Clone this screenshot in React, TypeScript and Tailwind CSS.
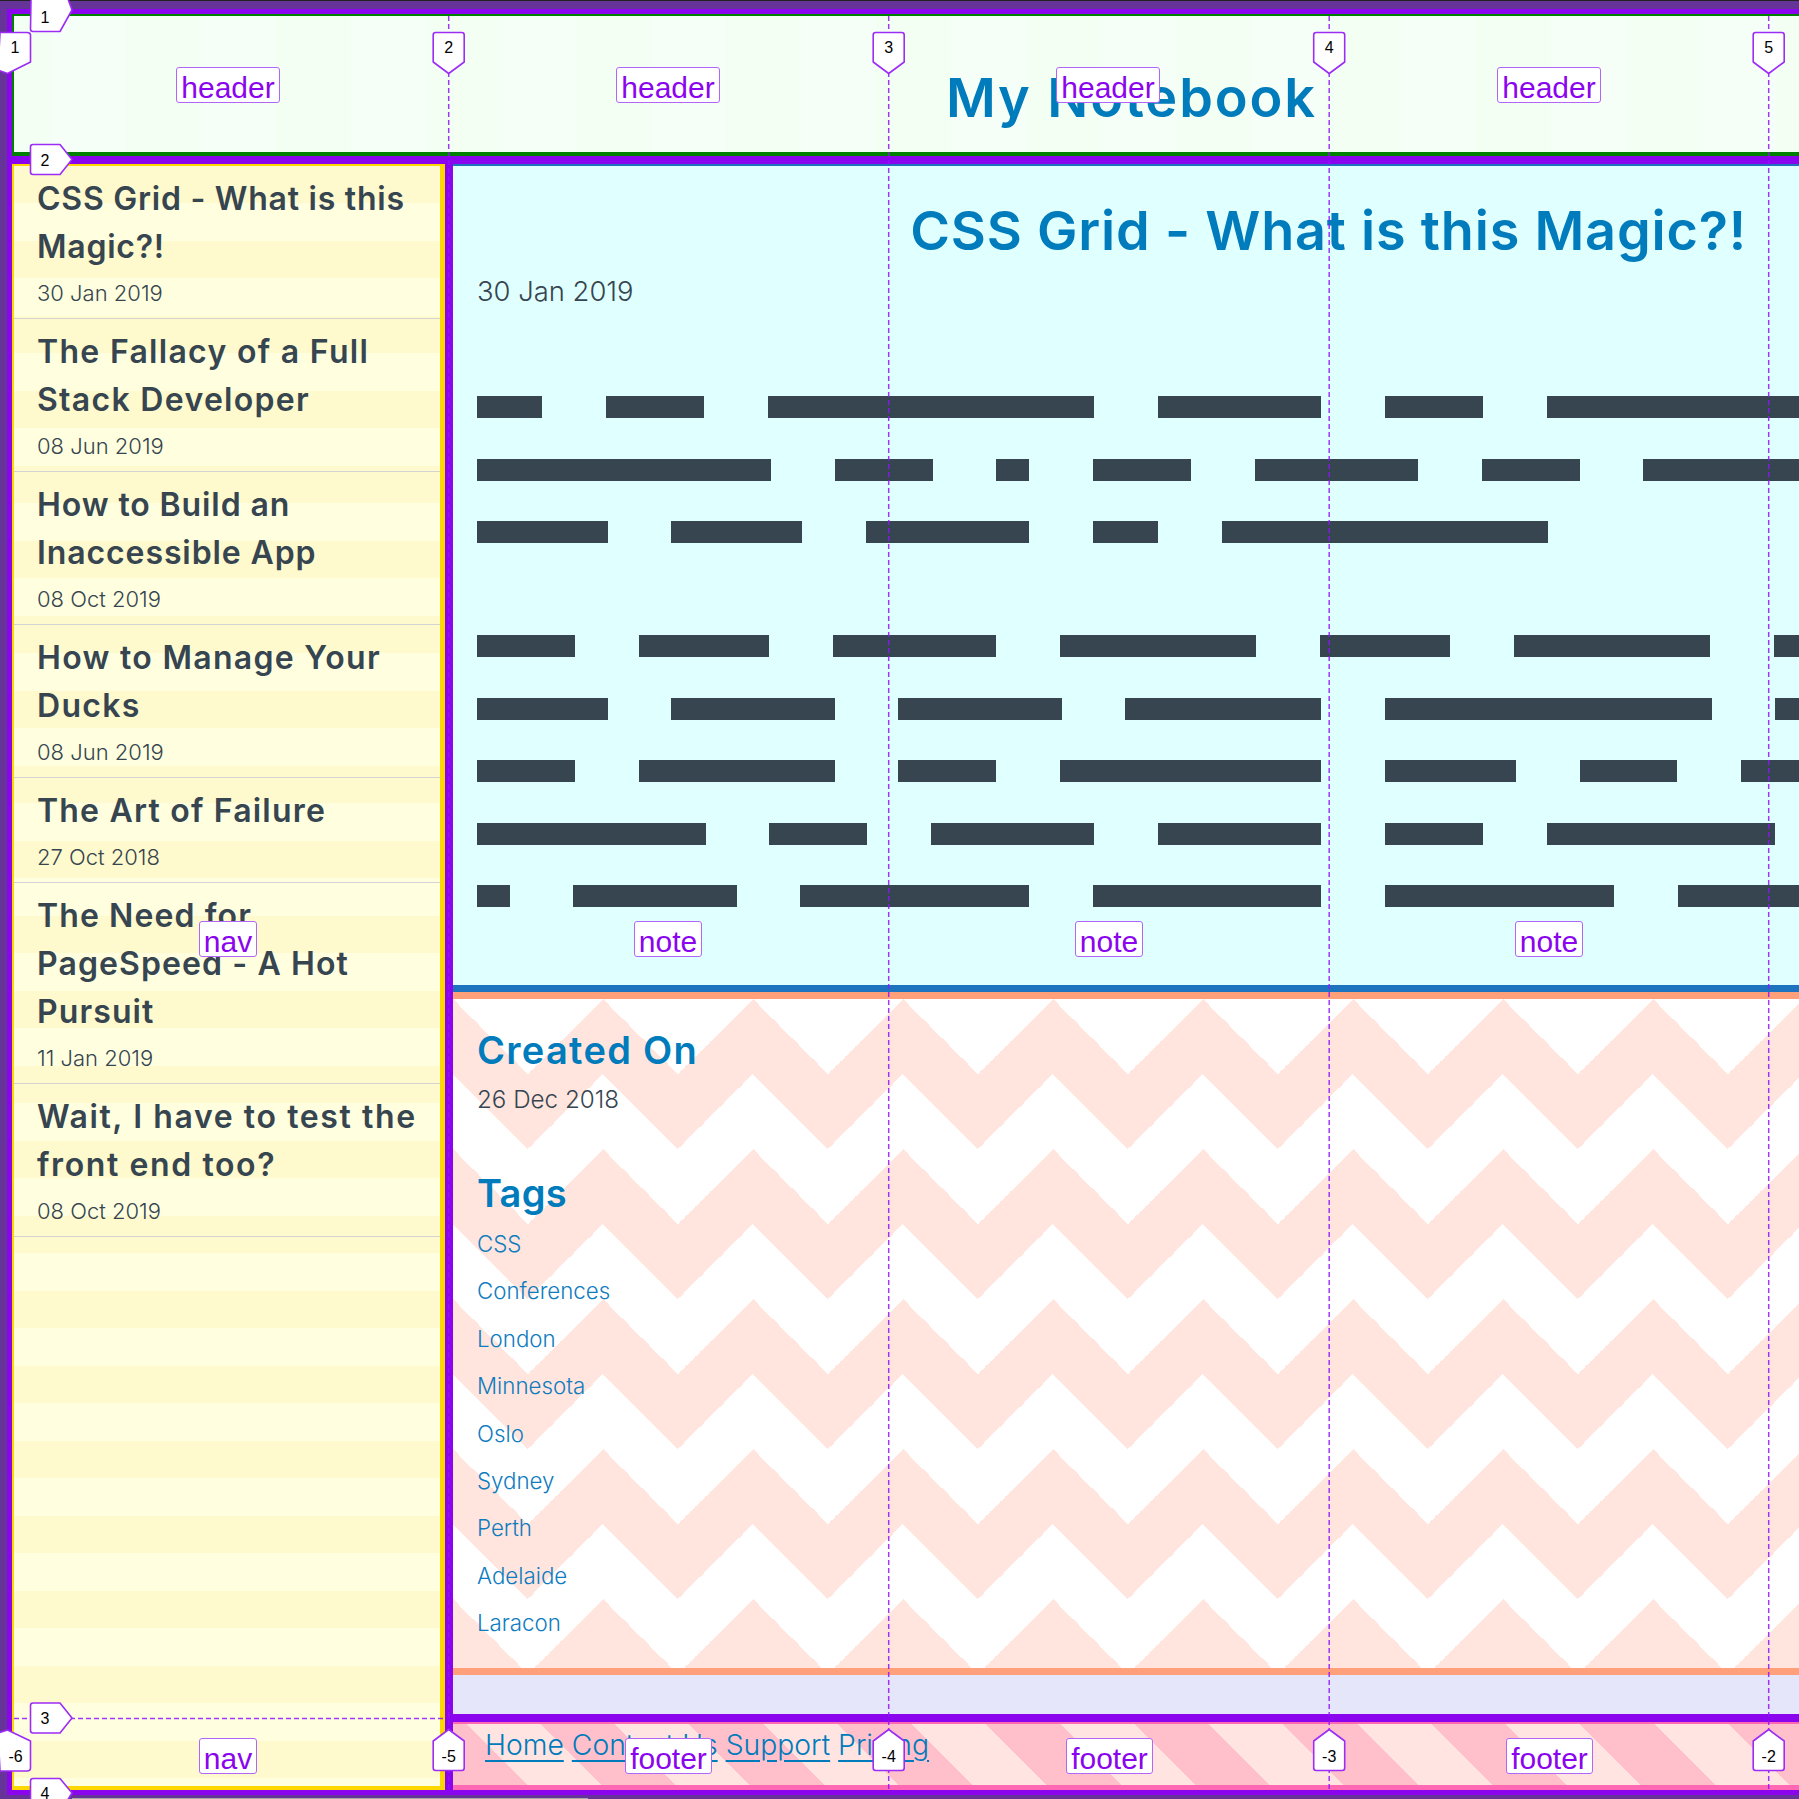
import React from "react";

const navItems = [
  { lines: ["CSS Grid - What is this", "Magic?!"], date: "30 Jan 2019", tracking: "tracking-[0.75px]" },
  { lines: ["The Fallacy of a Full", "Stack Developer"], date: "08 Jun 2019", tracking: "tracking-[1.3px]" },
  { lines: ["How to Build an", "Inaccessible App"], date: "08 Oct 2019", tracking: "tracking-[0.9px]" },
  { lines: ["How to Manage Your", "Ducks"], date: "08 Jun 2019", tracking: "tracking-[1.3px]" },
  { lines: ["The Art of Failure"], date: "27 Oct 2018", tracking: "tracking-[1.2px]" },
  { lines: ["The Need for", "PageSpeed - A Hot", "Pursuit"], date: "11 Jan 2019", tracking: "tracking-[1.1px]" },
  { lines: ["Wait, I have to test the", "front end too?"], date: "08 Oct 2019", tracking: "tracking-[1.6px]" },
];

const tags = ["CSS", "Conferences", "London", "Minnesota", "Oslo", "Sydney", "Perth", "Adelaide", "Laracon"];

// redacted copy: each number is a word length in blocks
const paragraphOne = [
  [2, 3, 10, 5, 3, 9],
  [9, 3, 1, 3, 5, 3, 9],
  [4, 4, 5, 2, 10],
];
const paragraphTwo = [
  [3, 4, 5, 6, 4, 6, 9],
  [4, 5, 5, 6, 10, 9],
  [3, 6, 3, 8, 4, 3, 9],
  [7, 3, 5, 5, 3, 7],
  [1, 5, 7, 7, 7, 9],
];

const labels = [
  { text: "header", className: "left-[176px] top-[67px] w-[104px]" },
  { text: "header", className: "left-[616px] top-[67px] w-[104px]" },
  { text: "header", className: "left-[1056px] top-[67px] w-[104px]" },
  { text: "header", className: "left-[1497px] top-[67px] w-[104px]" },
  { text: "nav", className: "left-[199px] top-[921px] w-[58px]" },
  { text: "nav", className: "left-[199px] top-[1738px] w-[58px]" },
  { text: "note", className: "left-[634px] top-[921px] w-[68px]" },
  { text: "note", className: "left-[1075px] top-[921px] w-[68px]" },
  { text: "note", className: "left-[1515px] top-[921px] w-[68px]" },
  { text: "footer", className: "left-[625px] top-[1738px] w-[87px]" },
  { text: "footer", className: "left-[1066px] top-[1738px] w-[87px]" },
  { text: "footer", className: "left-[1506px] top-[1738px] w-[87px]" },
];

const columnLines = [448.7, 888.7, 1329.2, 1768.7];

const downBadge = (x: number) =>
  `M${x - 15.5} 35 Q${x - 15.5} 32.5 ${x - 13} 32.5 L${x + 13} 32.5 Q${x + 15.5} 32.5 ${x + 15.5} 35 L${x + 15.5} 62 L${x} 73.5 L${x - 15.5} 62 Z`;
const upBadge = (x: number) =>
  `M${x - 15.5} 1768 Q${x - 15.5} 1770.5 ${x - 13} 1770.5 L${x + 13} 1770.5 Q${x + 15.5} 1770.5 ${x + 15.5} 1768 L${x + 15.5} 1741 L${x} 1729.5 L${x - 15.5} 1741 Z`;
const rightBadge = (y: number) =>
  `M30.5 ${y - 12.5} Q30.5 ${y - 15} 33 ${y - 15} L60 ${y - 15} L72 ${y} L60 ${y + 15} L33 ${y + 15} Q30.5 ${y + 15} 30.5 ${y + 12.5} Z`;

const Bars = ({ words }: { words: number[] }) => (
  <div className="flex h-[62.4px] items-center gap-[63.8px]">
    {words.map((n, i) => (
      <div key={i} className="h-[22px] shrink-0 bg-[#36454f]" style={{ width: n * 32.65 }} />
    ))}
  </div>
);

const Overlay = () => (
  <svg className="absolute left-0 top-0 h-[1799px] w-[1799px]" viewBox="0 0 1799 1799" fill="none">
    <g stroke="#9013fe" strokeOpacity="0.85" strokeWidth="1.5" strokeDasharray="5 3">
      {columnLines.map((x) => (
        <line key={x} x1={x} y1="16" x2={x} y2="1790" />
      ))}
      <line x1="14" y1="1718.5" x2="445" y2="1718.5" />
    </g>
    <g fill="#fff" stroke="#9d2cf6" strokeWidth="1.6" strokeLinejoin="round">
      <path d={downBadge(448.7)} />
      <path d={downBadge(888.7)} />
      <path d={downBadge(1329.2)} />
      <path d={downBadge(1768.7)} />
      <path d={upBadge(448.7)} />
      <path d={upBadge(888.7)} />
      <path d={upBadge(1329.2)} />
      <path d={upBadge(1768.7)} />
      <path d={rightBadge(159.5)} />
      <path d={rightBadge(1718)} />
      <path d="M0 32.5 L27 32.5 Q30.5 32.5 30.5 35 L30.5 62 L7.5 73.5 L-2 70 Z" />
      <path d="M0 1771 L27 1771 Q30.5 1771 30.5 1768 L30.5 1741 L7.5 1730 L-2 1733 Z" />
      <path d="M31 -1 L68 -1 L72 10 L60 31.5 L33 31.5 Q30.5 31.5 30.5 29 Z" />
      <path d="M30.5 1781 Q30.5 1778.5 33 1778.5 L60 1778.5 L72 1793 L67 1801 L30.5 1801 Z" />
    </g>
    <g
      fill="#000"
      textAnchor="middle"
      dominantBaseline="central"
      className="font-['Liberation_Sans',Arial,sans-serif] text-[16px]"
    >
      <text x="45" y="17">1</text>
      <text x="15" y="47">1</text>
      <text x="448.7" y="47">2</text>
      <text x="888.7" y="47">3</text>
      <text x="1329.2" y="47">4</text>
      <text x="1768.7" y="47">5</text>
      <text x="45" y="160">2</text>
      <text x="45" y="1718">3</text>
      <text x="45" y="1793">4</text>
      <text x="15.5" y="1756">-6</text>
      <text x="448.7" y="1756">-5</text>
      <text x="888.7" y="1756">-4</text>
      <text x="1329.2" y="1756">-3</text>
      <text x="1768.7" y="1756">-2</text>
    </g>
  </svg>
);

export default function App() {
  return (
    <div className="relative h-[1799px] w-[1799px] overflow-hidden bg-[#663399] font-['Inter',sans-serif] text-[#36454f]">
      <div className="h-px bg-[#222]" />
      <div className="ml-[7px] mt-[8px] h-[1786px] bg-[#8b04ee] pl-[5px] pt-[5px]">
        <div className="grid grid-cols-[433px_1fr] grid-rows-[142px_1550px_68px] gap-[8px]">
          <header className="col-span-2 flex justify-end border-b-[4px] border-l-[2px] border-t-[2px] border-[#008000] bg-[linear-gradient(90deg,#f2fff2_25%,#f5fff8_25%,#f5fff8_75%,#f2fff2_75%)] bg-size-[150px_100%] pr-[482px] pt-[40px]">
            <h1 className="text-[54px] font-semibold leading-[84px] tracking-[1.9px] text-[#007bbb]">My Notebook</h1>
          </header>

          <nav className="row-span-2 border-b-[4px] border-l-[2px] border-r-[5px] border-t-[2px] border-[#ffd700] bg-[linear-gradient(180deg,#fffacd_50%,#ffffe0_50%)] bg-size-[100%_75px]">
            {navItems.map((item) => (
              <div key={item.lines[0]} className="border-b border-[#d3d3d3] pb-[7px] pl-[23px] pt-[9px]">
                <h2 className={`whitespace-nowrap text-[32px] font-semibold leading-[48px] ${item.tracking}`}>
                  {item.lines.map((line) => (
                    <span key={line} className="block">{line}</span>
                  ))}
                </h2>
                <p className="mt-[4px] text-[22px] font-light leading-[36px]">{item.date}</p>
              </div>
            ))}
          </nav>

          <main className="flex min-w-0 flex-col bg-[#e6e6fa]">
            <section className="h-[828px] shrink-0 border-b-[7px] border-t-[2px] border-[#1e73be] bg-[#e0ffff] pl-[24px]">
              <h1 className="pr-[52px] pt-[23px] text-right text-[54px] font-semibold leading-[84px] tracking-[0.8px] text-[#007bbb]">
                CSS Grid - What is this Magic?!
              </h1>
              <p className="-mt-[2px] text-[27.4px] font-light leading-[40px]">30 Jan 2019</p>
              <div className="mt-[65px]">
                {paragraphOne.map((words, i) => (
                  <Bars key={i} words={words} />
                ))}
              </div>
              <div className="mt-[52px]">
                {paragraphTwo.map((words, i) => (
                  <Bars key={i} words={words} />
                ))}
              </div>
            </section>

            <aside className="h-[683px] shrink-0 border-y-[7px] border-[#ffa07a] bg-[#ffe5dd] bg-[linear-gradient(135deg,#fff_25%,transparent_25%),linear-gradient(225deg,#fff_25%,transparent_25%),linear-gradient(315deg,#fff_25%,transparent_25%),linear-gradient(45deg,#fff_25%,transparent_25%)] bg-size-[150px_150px] pl-[24px] pt-[21px] [background-position:-75px_0,-75px_0,0_0,0_0]">
              <h2 className="text-[38px] font-semibold leading-[60px] tracking-[1.3px] text-[#007bbb]">Created On</h2>
              <p className="text-[24.2px] font-light leading-[40px]">26 Dec 2018</p>
              <h2 className="mt-[43px] text-[38px] font-semibold leading-[60px] tracking-[0.3px] text-[#007bbb]">Tags</h2>
              <ul className="-mt-[3px]">
                {tags.map((tag) => (
                  <li key={tag} className="text-[22.3px] font-light leading-[47.4px] text-[#0f7cc0]">{tag}</li>
                ))}
              </ul>
            </aside>
          </main>

          <footer className="flex gap-[8px] border-b-[5px] border-t-[2px] border-[#ff69b4] bg-[repeating-linear-gradient(45deg,#ffc0cb,#ffc0cb_52.5px,#ffe4e1_52.5px,#ffe4e1_105px)] pl-[32px] pt-[1px]">
            {["Home", "Contact Us", "Support", "Pricing"].map((link) => (
              <a key={link} className="text-[28.3px] font-light leading-[40px] text-[#007bbb] underline underline-offset-[5px]">
                {link}
              </a>
            ))}
          </footer>
        </div>
      </div>

      <Overlay />

      {labels.map((label, i) => (
        <span
          key={i}
          className={`absolute flex h-[36px] items-center justify-center rounded-[3px] border-[1.5px] border-[#b266f7] bg-white pt-[6px] font-['Liberation_Sans',Arial,sans-serif] text-[30px] leading-none text-[#8b04ee] ${label.className}`}
        >
          {label.text}
        </span>
      ))}

      <div className="absolute bottom-0 left-[72px] h-px w-[516px] bg-[#aaa]" />
    </div>
  );
}
